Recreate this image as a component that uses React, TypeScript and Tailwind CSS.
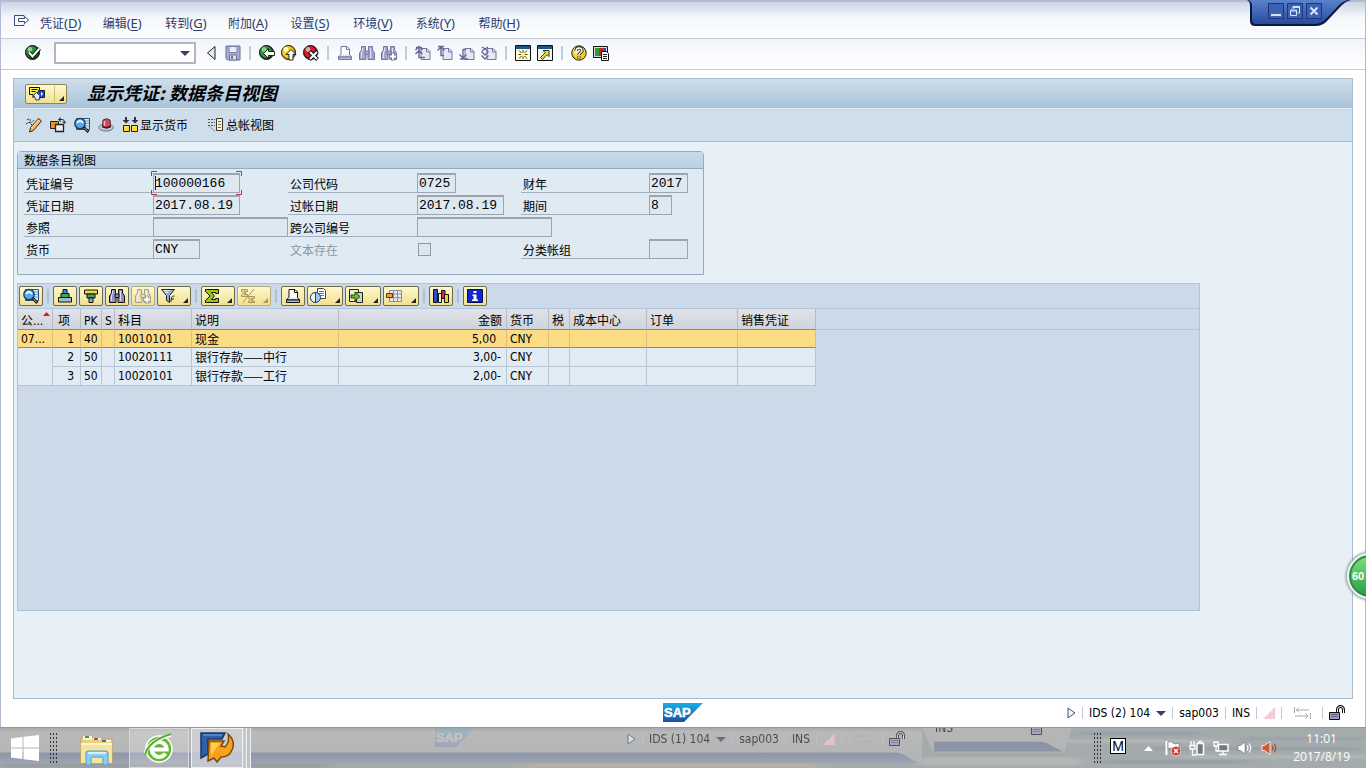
import { Fragment, useState } from 'react';
import type { ReactNode } from 'react';

const uiFont = "font-['DejaVu_Sans_Condensed','DejaVu_Sans','Noto_Sans_CJK_SC',sans-serif]";
const cjkFont = "font-['Noto_Sans_CJK_SC',sans-serif]";
const monoFont = "font-['Liberation_Mono','Noto_Sans_CJK_SC',monospace]";

interface IconProps {
  children: ReactNode;
  size?: string;
}

function Icon({ children, size = 'h-4 w-4' }: IconProps) {
  return (
    <svg viewBox="0 0 16 16" className={`${size} shrink-0`} fill="none" aria-hidden="true">
      {children}
    </svg>
  );
}

function Ball({ light, mid, dark, children }: { light: string; mid: string; dark: string; children: ReactNode }) {
  return (
    <Icon>
      <circle cx="7.5" cy="7.5" r="7" fill={dark} stroke="#111" />
      <circle cx="7" cy="7" r="5.8" fill={mid} />
      <circle cx="5" cy="4.5" r="2.4" fill={light} />
      {children}
    </Icon>
  );
}

const EnterIcon = () => (
  <Ball light="#8fd08f" mid="#2e8b3a" dark="#0c4a1c">
    <path d="M4 7.500l3.500 4L14.500 3.500" stroke="#111" strokeWidth="4" />
    <path d="M4 7.500l3.500 4L14.500 3.500" stroke="#fff" strokeWidth="2" />
  </Ball>
);

const BackIcon = () => (
  <Ball light="#8fd08f" mid="#2e9a3a" dark="#0c4a1c">
    <path d="M4.500 8.500l5-5v3h6v4h-6v3z" fill="#fff" stroke="#111" strokeWidth="0.9" />
  </Ball>
);

const ExitIcon = () => (
  <Ball light="#fffbc0" mid="#f4cf22" dark="#c79a10">
    <path d="M10 4.500l5 5h-3v5.500h-4v-5.500h-3z" fill="#fff" stroke="#111" strokeWidth="0.9" />
  </Ball>
);

const CancelIcon = () => (
  <Ball light="#f2a0a0" mid="#c91f2a" dark="#7d0d14">
    <path d="M6.500 6.500l8 8M14.500 6.500l-8 8" stroke="#111" strokeWidth="4" />
    <path d="M7 7l7 7M14 7l-7 7" stroke="#fff" strokeWidth="2" />
  </Ball>
);

const HelpIcon = () => (
  <Icon>
    <circle cx="8" cy="8" r="7.200" fill="#f0cf20" stroke="#222" />
    <circle cx="6.500" cy="6" r="4" fill="#fbf08a" />
    <path d="M5 6c0-4 6-4 6-.5 0 2.500-3 2-3 4.500M8 11.500v2" stroke="#222" strokeWidth="3.200" />
    <path d="M5 6c0-4 6-4 6-.5 0 2.500-3 2-3 4.500M8 11.700v1.600" stroke="#fff" strokeWidth="1.500" />
  </Icon>
);

const SaveIcon = () => (
  <Icon>
    <path d="M1 1h14v14H2.500L1 13.500z" fill="#a9acd4" stroke="#6d6f9c" />
    <path d="M4 1.500h8v6H4z" fill="#e9ebf7" stroke="#7d80ad" />
    <path d="M4.500 10h7v5h-7z" fill="#dfe1f0" stroke="#6d6f9c" />
    <path d="M6 11h2v3H6z" fill="#6d6f9c" />
  </Icon>
);

function PrintIcon({ muted = false }: { muted?: boolean }) {
  const line = muted ? '#74769f' : '#111';
  return (
    <Icon>
      <path d="M4 1.500h6l2.500 2.500v6.500H4z" fill="#fff" stroke={line} />
      <path d="M9.500 1.500V4.500h3" stroke={line} />
      <path d="M3.500 9.500L1.500 12h13l-2-2.500" fill={muted ? '#e3e5f2' : '#e8ecf2'} stroke={line} />
      <path d="M1.500 12h13v2.500h-13z" fill={muted ? '#b9bbd9' : '#a8bfd6'} stroke={line} />
    </Icon>
  );
}

function FindIcon({ muted = false, more = false, pale = false }: { muted?: boolean; more?: boolean; pale?: boolean }) {
  const line = pale ? '#a5a08c' : muted ? '#7375a5' : '#111';
  const fill = pale ? '#e6e0c0' : muted ? '#a4a6d0' : '#8d90c6';
  return (
    <Icon>
      <path d="M2.500 1.500h4v4l.5 2v7H.5V8l2-3z" fill={fill} stroke={line} />
      <path d="M13.500 1.500h-4v4L9 7.500v7h6.500V8l-2-3z" fill={fill} stroke={line} />
      <path d="M6 6h4v3.500H6z" fill={fill} stroke={line} />
      <path d="M3.500 3v2l-1 3v5M11.500 3v10" stroke="#fff" strokeOpacity="0.7" />
      {more && <path d="M12 7.500v8M8 11.500h8" stroke={line} strokeWidth="4" />}
      {more && <path d="M12 8.500v6M9 11.500h6" stroke="#fff" strokeWidth="2" />}
    </Icon>
  );
}

function PageIcon({ children }: { children: ReactNode }) {
  return (
    <Icon>
      <path d="M6 3.500h6l3 3v8H6z" fill="#e6e8f5" stroke="#74769f" />
      <path d="M11.500 3.500V7H15" stroke="#74769f" />
      <g stroke="#65679a" strokeWidth="1.400">{children}</g>
    </Icon>
  );
}

const FirstPageIcon = () => (
  <PageIcon>
    <path d="M.5 5L4 1.500 7.500 5M.5 9L4 5.500 7.500 9M4 2v10.500h6M1 2.500h6" />
  </PageIcon>
);
const PrevPageIcon = () => (
  <PageIcon>
    <path d="M.5 5.500L4 2l3.500 3.500M4 2.500v8h3M1 1.500h6" />
  </PageIcon>
);
const NextPageIcon = () => (
  <PageIcon>
    <path d="M.5 9.500L4 13l3.500-3.500M4 4v8.500M1 14h8M4 4.500h3" />
  </PageIcon>
);
const LastPageIcon = () => (
  <PageIcon>
    <path d="M.5 6.500L4 10l3.500-3.500M.5 10.500L4 14l3.500-3.500M1 2l6 4M7 2L1 6" />
  </PageIcon>
);

const SessionIcon = () => (
  <Icon>
    <path d="M.5.5h15v15H.5z" fill="#fffde0" stroke="#111" />
    <path d="M1 1h14v3H1z" fill="#1d5487" />
    <path d="M8 5v3M8 11v3M3.500 9.500h3M9.500 9.500h3M4 5.500l2.500 2.500M9.500 11l2.500 2.500M12 5.500L9.500 8M6.500 11L4 13.500" stroke="#4a4400" />
    <circle cx="8" cy="9.500" r="2" fill="#fff27a" />
  </Icon>
);

const ShortcutIcon = () => (
  <Icon>
    <path d="M.5.5h15v15H.5z" fill="#f3f5ef" stroke="#111" />
    <path d="M1 1h14v3H1z" fill="#1d5487" />
    <path d="M6 5.500h6v6l-2-2-4.500 5-2-2L8.500 7.500z" fill="#efe23c" stroke="#222" strokeWidth="0.900" />
  </Icon>
);

const LayoutIcon = () => (
  <Icon>
    <path d="M.5 1.500h14v11H.5z" fill="#d8dce4" stroke="#111" />
    <path d="M2 3h4v8H2z" fill="#2ba02b" />
    <path d="M6 3h4v8H6z" fill="#d32020" />
    <path d="M10 3h3v8h-3z" fill="#3448cc" />
    <path d="M8.500 6.500h5l2 2v7h-7z" fill="#fff" stroke="#111" />
    <path d="M10 9.500h4M10 11.500h4M10 13.500h4" stroke="#222" />
  </Icon>
);

const CommandIcon = () => (
  <svg viewBox="0 0 18 16" className="h-4 w-[18px] shrink-0" fill="none" aria-hidden="true">
    <path d="M1.500 1.500h10v7h-4l-2.500 3v-3H1.500z" fill="#fff04a" stroke="#111" />
    <path d="M3.500 3.500h6M3.500 5.500h4" stroke="#111" />
    <path d="M10.500 4.500h6v7h-4l-1 1.500-3-3z" fill="#244bb8" stroke="#101840" />
    <path d="M5.500 9l3-2.500 3.500 3-1 4.500H8z" fill="#dfe9f7" stroke="#26355f" />
    <path d="M13 6l2 2-2 2z" fill="#fff" />
  </svg>
);

const EditIcon = () => (
  <Icon>
    <path d="M1 3c2-2 4-1 3 1-1 2 2 2 4-1" stroke="#222" strokeDasharray="2 1" />
    <path d="M0 7l3-2 3 3" stroke="#222" strokeDasharray="2 1" />
    <path d="M12.500 1.500l3 2.500-8 9.500-4 1.500 1-4.500z" fill="#f3b45a" stroke="#3a2a12" />
    <path d="M12.500 3L5.500 11" stroke="#ffe8bb" />
  </Icon>
);

const OtherDocIcon = () => (
  <Icon>
    <path d="M.5 4.500h8v7h-8z" fill="#f0921f" stroke="#222" />
    <path d="M5.500 7.500h8v7h-8z" fill="#e9eef5" stroke="#222" strokeWidth="1.300" />
    <path d="M9 2.500h3.500q2 0 2 3" stroke="#222" />
    <path d="M11 .5L8.500 2.500 11 4.500M12.500 4.500l2 2 1.500-2" stroke="#222" />
  </Icon>
);

const DetailIcon = () => (
  <Icon>
    <path d="M2.500 1.500h13v11h-13z" fill="#d8eafa" stroke="#2a4f80" />
    <path d="M3 4h12M3 6.500h12M3 9h12" stroke="#6d9bcc" />
    <circle cx="6" cy="6.500" r="5.200" fill="#57a7e6" stroke="#173864" strokeWidth="1.300" />
    <path d="M3 6q3-4 6 0" stroke="#e6f5ff" strokeWidth="2" />
    <path d="M9.500 10l5 5" stroke="#222" strokeWidth="3" />
    <path d="M10.500 11l3.500 3.500" stroke="#9bb8d8" />
  </Icon>
);

const HeaderHatIcon = () => (
  <Icon>
    <ellipse cx="8" cy="10.500" rx="7.300" ry="3.500" fill="#c2cbdc" stroke="#6a7088" />
    <path d="M4.500 10L5 3q3.500-2.500 7 0l.5 7q-4 2.500-8 0z" fill="#cf4a58" stroke="#5a2732" />
    <path d="M6.500 4v5" stroke="#f5b4ba" strokeWidth="1.500" />
    <path d="M4.500 9.500q4 2 8 0" stroke="#461820" strokeWidth="1.500" />
  </Icon>
);

const CurrencyIcon = () => (
  <svg viewBox="0 0 17 16" className="h-4 w-[17px] shrink-0" fill="none" aria-hidden="true">
    <path d="M4 0v5M13 0v5" stroke="#333" strokeWidth="2" />
    <path d="M.5 3h7L4 6.500zM9.500 3h7L13 6.500z" fill="#333" />
    <path d="M1.500 8.500h6v6h-6zM9.500 8.500h6v6h-6z" fill="#ffd72e" stroke="#222" />
    <path d="M3 10h2M11 10h2" stroke="#fff7c0" />
  </svg>
);

const LedgerIcon = () => (
  <Icon>
    <path d="M0 2.500h7M0 5.500h7M0 8.500h7" stroke="#555" strokeDasharray="2 1" />
    <path d="M1.500 9.500l6 5" stroke="#555" strokeDasharray="1 1" />
    <path d="M8.500 1.500h6v12h-6z" fill="#fff7bd" stroke="#333" />
    <path d="M10 4.500h3M10 7.500h3M10 10.500h3" stroke="#666" />
  </Icon>
);

const SortAscIcon = () => (
  <Icon>
    <path d="M6 1.500h4v4H6z" fill="#3c8bd0" stroke="#111" />
    <path d="M4 5.500h8v4H4z" fill="#43a06a" stroke="#111" />
    <path d="M1.500 9.500h13V14h-13z" fill="#8fc3c9" stroke="#111" />
  </Icon>
);

const SortDescIcon = () => (
  <Icon>
    <path d="M1.500 2h13v4h-13z" fill="#ead83e" stroke="#111" />
    <path d="M4 6h8v4H4z" fill="#43a06a" stroke="#111" />
    <path d="M6 10h4v4.500H6z" fill="#7fb8c4" stroke="#111" />
  </Icon>
);

const FilterIcon = () => (
  <Icon>
    <path d="M1.500 1.500h13l-5 6v7l-3-2v-5z" fill="#8cb4d4" stroke="#222" />
    <path d="M3.500 2.500h6M5 4.500h3" stroke="#e9f5ff" />
    <path d="M11 14c0-5 1-6 3.500-6M11 11h3" stroke="#222" />
  </Icon>
);

const SumIcon = () => (
  <Icon>
    <path d="M1.500 1.500h13v4h-3v-1H7.500l3 3.500-3 3.500h4v-1h3v4h-13v-2L6 8 1.500 3.500z" fill="#9bc21d" stroke="#111" />
  </Icon>
);

const SubtotalIcon = () => (
  <Icon>
    <path d="M1.500 1.500h6v2H4l2 1.500-2 1.500h3.500v2h-6V7l2-2-2-1.500zM8.500 8.500h6v2H11l2 1.300-2 1.400h3.500v1.300h-6V13l2-1.500-2-1.500z" fill="#f0dc7a" stroke="#a89858" />
    <path d="M14 1L3 14.500" stroke="#a89858" />
  </Icon>
);

const ViewsIcon = () => (
  <Icon>
    <path d="M7.500.5h6l2 2v8h-8z" fill="#fff" stroke="#444" />
    <path d="M9 3.500h5M9 5.500h5M9 7.500h5" stroke="#777" />
    <circle cx="5.500" cy="9.500" r="5" fill="#9cc8ee" stroke="#1f3f73" />
    <path d="M5.500 4.500v10a5 5 0 0 1 0-10z" fill="#f4faff" stroke="#1f3f73" />
  </Icon>
);

const ExportIcon = () => (
  <Icon>
    <path d="M1.500 1.500h9v12h-9z" fill="#e7efd0" stroke="#222" />
    <path d="M8.500 4.500h6v10h-6z" fill="#c8d6d0" stroke="#222" />
    <path d="M3 7h4V4l5 4.500L7 13v-3H3z" fill="#7bb51f" stroke="#234a0c" />
  </Icon>
);

const VariantIcon = () => (
  <Icon>
    <path d="M3.500 2.500h12v11h-12zM3.500 6h12M3.500 9.700h12M7.500 2.500v11M11.500 2.500v11" fill="#e9ecef" stroke="#8a8d94" />
    <path d="M.5 5.500h6v4h-6z" fill="#ee9a37" stroke="#5e3a12" />
  </Icon>
);

const ChartIcon = () => (
  <Icon>
    <path d="M.5 1.500h4v13h-4z" fill="#2d4cc0" stroke="#111" />
    <path d="M5.500 5.500h3v9h-3z" fill="#e9edf2" stroke="#111" />
    <path d="M8.500 2.500h3.500v8H8.500z" fill="#d52f2f" stroke="#111" />
    <path d="M11.500 6.500h4v8h-4z" fill="#f3cb30" stroke="#111" />
  </Icon>
);

const InfoIcon = () => (
  <Icon>
    <path d="M.5 1.500h15v13H.5z" fill="#1428c8" stroke="#000a60" />
    <path d="M6.500 3h3v2h-3zM5.500 6.500h4v5h1.500V13h-6v-1.500h1.500V8H5.500z" fill="#fff" />
  </Icon>
);

const Corner = ({ off = false }: { off?: boolean }) => (
  <svg viewBox="0 0 5 5" className="mb-0.5 h-[5px] w-[5px] shrink-0 self-end" aria-hidden="true">
    <path d="M5 0v5H0z" fill={off ? '#a89858' : '#222'} />
  </svg>
);

const LockIcon = () => (
  <svg viewBox="0 0 16 16" className="h-4 w-4 shrink-0" fill="none" aria-hidden="true">
    <path d="M8.500 8V4.500a3 3 0 0 1 6 0V8" stroke="#111" strokeWidth="3" />
    <path d="M8.500 8V4.500a3 3 0 0 1 6 0V8" stroke="#fff" />
    <path d="M.5 7.500h10v7H.5z" fill="#9c9ec4" stroke="#111" />
    <path d="M2 9.500h7M2 11.500h7" stroke="#60628c" />
  </svg>
);

function SapLogo() {
  return (
    <svg viewBox="0 0 40 20" className="h-5 w-10 shrink-0" aria-label="SAP">
      <defs>
        <linearGradient id="sapBlue" x1="0" y1="0" x2="0" y2="1">
          <stop offset="0" stopColor="#16b0ea" />
          <stop offset="1" stopColor="#1b4fa3" />
        </linearGradient>
      </defs>
      <path d="M0 0h40L21 19H0z" fill="url(#sapBlue)" />
      <text x="1" y="14" fontSize="13" fontWeight="bold" fill="#fff" stroke="#fff" strokeWidth="0.500" fontFamily="Liberation Sans, sans-serif">
        SAP
      </text>
    </svg>
  );
}

const menus = [
  ['凭证', 'D'],
  ['编辑', 'E'],
  ['转到', 'G'],
  ['附加', 'A'],
  ['设置', 'S'],
  ['环境', 'V'],
  ['系统', 'Y'],
  ['帮助', 'H'],
];

function MenuBar() {
  return (
    <nav className="flex h-[37px] items-center border-b border-[#c5cbda] bg-linear-to-b from-[#cbd3e3] via-[#f3f6fb] via-40% to-white pt-2 pl-3">
      <button className="mr-2.5 mb-1.5" aria-label="菜单">
        <svg viewBox="0 0 17 14" className="h-3.5 w-[17px]" fill="none" aria-hidden="true">
          <path d="M11 2.500V1.500H1.500v10H11v-1M5.500 4.500h6V2.500l4 3.500-4 3.500V7.500h-6z" stroke="#3d4a78" />
        </svg>
      </button>
      <div className="flex w-[501px]">
        {menus.map(([label, key]) => (
          <button key={key} className="flex-1 text-left text-xs whitespace-nowrap text-[#2b3c6b]">
            {label}
            <span className="font-['Noto_Sans',sans-serif] text-[13px]">
              (<u className="underline-offset-2">{key}</u>)
            </span>
          </button>
        ))}
      </div>
    </nav>
  );
}

const Divider = () => <span className="mx-0.5 h-3.5 w-0.5 shrink-0 bg-[#c3cbd9]" />;

const systemTools: (null | { name: string; icon: ReactNode })[] = [
  {
    name: '隐藏命令字段',
    icon: (
      <Icon>
        <path d="M12 1.500v13L4.500 8z" fill="#e7eaf0" stroke="#222" />
      </Icon>
    ),
  },
  { name: '保存', icon: <SaveIcon /> },
  null,
  { name: '返回', icon: <BackIcon /> },
  { name: '退出', icon: <ExitIcon /> },
  { name: '取消', icon: <CancelIcon /> },
  null,
  { name: '打印', icon: <PrintIcon muted /> },
  { name: '查找', icon: <FindIcon muted /> },
  { name: '查找下一个', icon: <FindIcon muted more /> },
  null,
  { name: '第一页', icon: <FirstPageIcon /> },
  { name: '上一页', icon: <PrevPageIcon /> },
  { name: '下一页', icon: <NextPageIcon /> },
  { name: '最后一页', icon: <LastPageIcon /> },
  null,
  { name: '新建会话', icon: <SessionIcon /> },
  { name: '快捷方式', icon: <ShortcutIcon /> },
  null,
  { name: '帮助', icon: <HelpIcon /> },
  { name: '本地格式', icon: <LayoutIcon /> },
];

function SystemToolbar() {
  const [command, setCommand] = useState('');
  return (
    <div className="flex h-[31px] items-center border-b border-[#c5cbda] bg-linear-to-b from-[#f1f5fa] to-white pb-0.5 pl-6">
      <button aria-label="回车">
        <EnterIcon />
      </button>
      <div className="mr-[7px] ml-[13px] flex h-[22px] w-[142px] items-center border-2 border-[#b3b6bd] bg-white">
        <input
          aria-label="命令"
          value={command}
          onChange={(e) => setCommand(e.target.value)}
          className="min-w-0 flex-1 px-1 text-xs outline-none"
        />
        <button aria-label="历史" className="px-1">
          <svg viewBox="0 0 10 5" className="h-[5px] w-2.5" aria-hidden="true">
            <path d="M0 0h10L5 5z" fill="#35406b" />
          </svg>
        </button>
      </div>
      <div className="flex items-center gap-1.5">
        {systemTools.map((tool, i) =>
          tool ? (
            <button key={i} aria-label={tool.name}>
              {tool.icon}
            </button>
          ) : (
            <Divider key={i} />
          ),
        )}
      </div>
    </div>
  );
}

function WindowControls() {
  const button = 'flex h-4 w-4 items-center justify-center border border-[#1c3678] bg-[#3a62b4]';
  return (
    <div className="absolute -top-0.5 right-3.5 h-7 w-[104px]">
      <svg viewBox="0 0 104 28" className="absolute inset-0 h-7 w-[104px]" aria-hidden="true">
        <defs>
          <linearGradient id="tabBlue" x1="0" y1="0" x2="0" y2="1">
            <stop offset="0" stopColor="#5b82cc" />
            <stop offset="1" stopColor="#274b9c" />
          </linearGradient>
        </defs>
        <path d="M0 0q3 1 3 6v15q0 5 5 5h60q8 0 13-6l13-14q5-5 10-6z" fill="#0c1a40" />
        <path d="M1 0q4 1 4 6v13q0 5 4 5h58q7 0 12-5l13-14q4-4 9-5z" fill="url(#tabBlue)" />
      </svg>
      <div className="relative flex gap-[3px] pt-[3px] pl-[21px]">
        <button className={button} aria-label="最小化">
          <span className="mt-2 h-0.5 w-2.5 bg-[#d6e2f8]" />
        </button>
        <button className={button} aria-label="还原">
          <svg viewBox="0 0 12 12" className="h-3 w-3" fill="none" stroke="#d6e2f8" aria-hidden="true">
            <path d="M4 4V1.500h6.500V8H8.500M4 2.500h6M1.500 5h6v5.500h-6zM1.500 6h6" />
          </svg>
        </button>
        <button className={button} aria-label="关闭">
          <svg viewBox="0 0 10 10" className="h-2.5 w-2.5" fill="none" stroke="#d6e2f8" strokeWidth="2" aria-hidden="true">
            <path d="M1.500 1.500l7 7M8.500 1.500l-7 7" />
          </svg>
        </button>
      </div>
    </div>
  );
}

function Toolbar() {
  return (
    <div className="flex h-[33px] shrink-0 items-center gap-2 border-b border-[#a4b9cc] bg-[#cfdeeb] pl-3 text-xs text-black">
      <button aria-label="更改"><EditIcon /></button>
      <button aria-label="其他凭证"><OtherDocIcon /></button>
      <button aria-label="明细"><DetailIcon /></button>
      <button aria-label="凭证抬头"><HeaderHatIcon /></button>
      <button className="flex items-center gap-px">
        <CurrencyIcon />
        显示货币
      </button>
      <button className="ml-3 flex items-center gap-0.5">
        <LedgerIcon />
        总帐视图
      </button>
    </div>
  );
}

const labelLine = 'flex h-5 items-center border-b border-[#a3b1bf] pt-0.5 pl-0.5';
const fieldBox =
  'h-5 border border-t-2 border-[#9aa5b0] bg-[#dde8f0] pl-px text-[13px] text-black outline-none';

interface FieldProps {
  id: string;
  label: string;
  value: string;
  width: string;
  focused?: boolean;
  span?: string;
}

function Field({ id, label, value, width, focused = false, span = '' }: FieldProps) {
  return (
    <>
      <label htmlFor={id} className={labelLine}>
        {label}
      </label>
      <div className={`relative flex ${span}`}>
        <input id={id} readOnly value={value} className={`${fieldBox} ${monoFont} ${width}`} />
        {focused && (
          <svg viewBox="0 0 91 24" className="pointer-events-none absolute -top-0.5 -left-0.5 h-6 w-[91px]" fill="none" aria-hidden="true">
            <path d="M.5 5V.5H6M85 .5h5.500V5M.5 19v4.500H6M85 23.500h5.500V19" stroke="#c62a3c" />
            <path d="M4.500 5v14" stroke="#111" />
          </svg>
        )}
      </div>
    </>
  );
}

function DocumentHeader() {
  return (
    <section className="w-[687px] max-w-full rounded-t-sm border border-[#93aabf] bg-[#dfeaf3] text-xs">
      <h2 className="flex h-[17px] items-center border-b border-[#93aabf] bg-linear-to-b from-[#c9dbea] to-[#b9d0e4] pl-1.5 text-black">
        数据条目视图
      </h2>
      <div className="grid grid-cols-[129px_135px_129px_104px_128px_auto] gap-y-0.5 pt-1 pr-3.5 pb-[15px] pl-1.5">
        <Field id="docNo" label="凭证编号" value="100000166" width="w-[87px]" focused />
        <Field id="company" label="公司代码" value="0725" width="w-[39px]" />
        <Field id="year" label="财年" value="2017" width="w-[39px]" />

        <Field id="docDate" label="凭证日期" value="2017.08.19" width="w-[87px]" />
        <Field id="postDate" label="过帐日期" value="2017.08.19" width="w-[87px]" />
        <Field id="period" label="期间" value="8" width="w-[23px]" />

        <Field id="reference" label="参照" value="" width="w-[135px]" />
        <Field id="crossNo" label="跨公司编号" value="" width="w-[135px]" span="col-span-3" />

        <Field id="currency" label="货币" value="CNY" width="w-[47px]" />
        <label htmlFor="texts" className="flex h-5 items-center pt-0.5 pl-0.5 text-[#8d979f]">
          文本存在
        </label>
        <div className="flex items-center">
          <input
            id="texts"
            type="checkbox"
            disabled
            className="ml-px h-[13px] w-[13px] appearance-none border border-[#8f9aa5] bg-[#dbe6ee]"
          />
        </div>
        <Field id="ledgerGroup" label="分类帐组" value="" width="w-[39px]" />
      </div>
    </section>
  );
}

const gridTools: (null | { name: string; icon: ReactNode; wide?: string; off?: boolean })[] = [
  { name: '明细', icon: <DetailIcon /> },
  null,
  { name: '升序排序', icon: <SortAscIcon /> },
  { name: '降序排序', icon: <SortDescIcon /> },
  { name: '查找', icon: <FindIcon /> },
  { name: '查找下一个', icon: <FindIcon more pale />, off: true },
  { name: '过滤', icon: <FilterIcon />, wide: 'w-[34px]' },
  null,
  { name: '总计', icon: <SumIcon />, wide: 'w-[34px]' },
  { name: '小计', icon: <SubtotalIcon />, wide: 'w-[34px]', off: true },
  null,
  { name: '打印', icon: <PrintIcon /> },
  { name: '视图', icon: <ViewsIcon />, wide: 'w-9' },
  { name: '输出', icon: <ExportIcon />, wide: 'w-9' },
  { name: '格式', icon: <VariantIcon />, wide: 'w-9' },
  null,
  { name: '图形', icon: <ChartIcon /> },
  null,
  { name: '信息', icon: <InfoIcon /> },
];

const yellowButton = 'flex h-5 items-center rounded-xs border bg-linear-to-b from-[#fdf8cf] to-[#f3e08c]';

function GridToolbar() {
  return (
    <div className="flex h-[25px] items-center gap-0.5 border-b border-[#b4c5d8] pl-px">
      {gridTools.map((tool, i) =>
        tool ? (
          <button
            key={i}
            aria-label={tool.name}
            className={`${yellowButton} ${tool.off ? 'border-[#b5ad80]' : 'border-[#6f6a4a]'} ${
              tool.wide ? `${tool.wide} justify-between px-0.5` : 'w-6 justify-center'
            }`}
          >
            {tool.icon}
            {tool.wide && <Corner off={tool.off} />}
          </button>
        ) : (
          <span key={i} className="mx-0.5 h-3.5 w-0.5 bg-[#b0bfd2]" />
        ),
      )}
    </div>
  );
}

interface Item {
  no: number;
  key: string;
  account: string;
  text: string;
  amount: string;
  currency: string;
}

const items: Item[] = [
  { no: 1, key: '40', account: '10010101', text: '现金', amount: '5,00', currency: 'CNY' },
  { no: 2, key: '50', account: '10020111', text: '银行存款——中行', amount: '3,00-', currency: 'CNY' },
  { no: 3, key: '50', account: '10020101', text: '银行存款——工行', amount: '2,00-', currency: 'CNY' },
];

const columns = [
  { title: '公...', width: 35 },
  { title: '项', width: 28 },
  { title: 'PK', width: 21 },
  { title: 'S', width: 13 },
  { title: '科目', width: 77 },
  { title: '说明', width: 147 },
  { title: '金额', width: 168 },
  { title: '货币', width: 42 },
  { title: '税', width: 21 },
  { title: '成本中心', width: 77 },
  { title: '订单', width: 91 },
  { title: '销售凭证', width: 78 },
];

function ItemTable() {
  return (
    <table className={`table-fixed border-separate border-spacing-0 text-xs whitespace-nowrap text-black ${uiFont}`}>
      <colgroup>
        {columns.map((c) => (
          <col key={c.title} style={{ width: c.width }} />
        ))}
      </colgroup>
      <thead>
        <tr className="h-5 bg-linear-to-b from-[#e0e3e9] to-[#cfd3da]">
          {columns.map((c, i) => (
            <th
              key={c.title}
              className={`relative border-r border-[#b3bcc8] pt-1 pb-0 leading-4 font-normal ${
                c.title === '金额' ? 'pr-1 text-right' : 'pl-[3px] text-left'
              } ${c.title === '项' ? 'pl-[5px]' : ''} ${i === 0 ? 'pl-1' : ''}`}
            >
              {c.title}
              {i === 0 && (
                <svg viewBox="0 0 7 4" className="absolute top-[3px] right-0.5 h-1 w-[7px]" aria-hidden="true">
                  <path d="M3.500 0L7 4H0z" fill="#c81e32" />
                </svg>
              )}
            </th>
          ))}
        </tr>
      </thead>
      <tbody>
        {items.map((item, i) => {
          const selected = i === 0;
          const cell = `border-r py-0 pl-[3px] ${
            selected ? 'border-y border-r-[#d9c07c] border-y-[#b9803c] bg-[#fbdb84]' : 'border-b border-[#b7c6d4] bg-[#e1ebf4]'
          }`;
          return (
            <tr key={item.no} className="h-[19px]">
              {selected && <td className={`${cell} pl-1`}>07...</td>}
              {i === 1 && <td rowSpan={2} className={cell} />}
              <td className={`${cell} pr-1.5 text-right`}>{item.no}</td>
              <td className={cell}>{item.key}</td>
              <td className={cell} />
              <td className={`${cell} pl-1`}>{item.account}</td>
              <td className={`${cell} ${cjkFont} leading-4`}>{item.text}</td>
              <td className={`${cell} text-right ${item.amount.endsWith('-') ? 'pr-[5px]' : 'pr-2.5'}`}>{item.amount}</td>
              <td className={`${cell} pl-1`}>{item.currency}</td>
              <td className={cell} />
              <td className={cell} />
              <td className={cell} />
              <td className={cell} />
            </tr>
          );
        })}
      </tbody>
    </table>
  );
}

function StatusFields({ session }: { session: number }) {
  const fields: ReactNode[] = [
    <span key="ids" className="flex items-center gap-1.5">
      IDS ({session}) 104
      <svg viewBox="0 0 10 5" className="h-[5px] w-2.5" aria-hidden="true">
        <path d="M0 0h10L5 5z" fill="#35406b" />
      </svg>
    </span>,
    <span key="host">sap003</span>,
    <span key="mode">INS</span>,
    <svg key="signal" viewBox="0 0 12 12" className="h-3 w-3" aria-hidden="true">
      <path d="M0 12L12 0v12z" fill="#f6d3da" />
      <path d="M3 9v3M7 5v7M11 1v11" stroke="#efbcc6" />
    </svg>,
    <svg key="arrows" viewBox="0 0 28 14" className="h-3.5 w-7" fill="none" stroke="#a5a9b2" aria-hidden="true">
      <path d="M6.500 1v6M8 4h13M11 1.500L8.500 4l2.500 2.500M7 10h13M17.500 7.500L20 10l-2.500 2.500M22.500 7v6" />
    </svg>,
    <LockIcon key="lock" />,
  ];
  return (
    <div className={`flex items-center gap-1.5 text-xs whitespace-nowrap text-black ${uiFont}`}>
      <svg viewBox="0 0 9 12" className="h-3 w-[9px]" fill="#f3f6fa" stroke="#3d5178" aria-hidden="true">
        <path d="M1 1v10l7-5z" />
      </svg>
      {fields.map((field, i) => (
        <Fragment key={i}>
          <span className="h-3 w-px bg-[#c3c9d4]" />
          {field}
        </Fragment>
      ))}
    </div>
  );
}

function StatusBar() {
  return (
    <footer className="grid h-7 shrink-0 grid-cols-[1fr_auto_1fr] items-center bg-white">
      <div className="col-start-2">
        <SapLogo />
      </div>
      <div className="flex justify-end pr-5">
        <StatusFields session={2} />
      </div>
    </footer>
  );
}

const Grip = ({ rows }: { rows: string }) => (
  <span className={`w-[9px] bg-[radial-gradient(#333_1px,transparent_1px)] bg-[size:3px_4px] ${rows}`} />
);

function Wallpaper() {
  return (
    <svg viewBox="0 0 1366 41" preserveAspectRatio="none" className="absolute inset-0 h-full w-full" aria-hidden="true">
      <defs>
        <linearGradient id="glass" x1="0" y1="0" x2="0" y2="1">
          <stop offset="0" stopColor="#a9a9a9" />
          <stop offset="0.120" stopColor="#b9b9b9" />
          <stop offset="1" stopColor="#b3b4b5" />
        </linearGradient>
        <linearGradient id="band" x1="0" y1="0" x2="0" y2="1">
          <stop offset="0" stopColor="#8d94a8" />
          <stop offset="1" stopColor="#9ea4b2" />
        </linearGradient>
        <filter id="soft">
          <feGaussianBlur stdDeviation="8 1" />
        </filter>
      </defs>
      <path d="M0 0h1366v41H0z" fill="#a5abad" />
      <g filter="url(#soft)">
        <path d="M1080 4h120v3h-120zM1150 20h210v3h-210zM1100 33h150v3h-150zM1240 10h126v2h-126z" fill="#939fa3" />
        <path d="M1060 12h160v3h-160zM1180 28h186v3h-186zM920 30h160v8H920z" fill="#b5b9b6" />
        <path d="M0 36h330v5H0z" fill="#999ea3" />
        <path d="M520 36h300v5H520z" fill="#b5b1a2" />
      </g>
      <path d="M0 0h922v34H0z" fill="url(#glass)" />
      <path d="M0 25h893q10 0 15 5l10 6H0z" fill="url(#band)" />
      <path d="M922 0h150l-8 25H934z" fill="#b4b5b5" />
      <path d="M934 14h105q8 0 14 5l10 5H934z" fill="#8d94a8" />
    </svg>
  );
}

function Taskbar() {
  return (
    <div className="relative flex h-[41px] shrink-0 items-center overflow-hidden border-t border-[#999]">
      <Wallpaper />
      <div className="pointer-events-none absolute top-0 left-0 flex h-[22px] w-[905px] items-center justify-end opacity-60">
        <StatusFields session={1} />
      </div>
      <div className="pointer-events-none absolute top-0 left-[435px] opacity-15">
        <SapLogo />
      </div>
      <div className={`pointer-events-none absolute -top-2 left-[935px] flex items-center gap-[78px] text-xs opacity-60 ${uiFont}`}>
        INS
        <LockIcon />
      </div>

      <button className="relative ml-[11px]" aria-label="开始">
        <svg viewBox="0 0 28 26" className="h-[26px] w-7" fill="#fff" aria-hidden="true">
          <path d="M0 3.500l11.500-1.500v10.500H0zM12.500 1.800L28 0v12.500H12.500zM0 13.500h11.500V24L0 22.500zM12.500 13.500H28V26l-15.500-1.800z" />
        </svg>
      </button>
      <span className="relative ml-[10px] flex">
        <Grip rows="h-8" />
      </span>
      <button className="relative ml-[22px] pt-1" aria-label="文件资源管理器">
        <svg viewBox="0 0 34 30" className="h-[30px] w-[34px]" aria-hidden="true">
          <path d="M1 2h11l2 2h18v24H1z" fill="#e9cf7c" stroke="#c9a94f" />
          <path d="M3 1h9v4H3z" fill="#f7f3d8" />
          <path d="M5 1h4v2H5z" fill="#3f9a44" />
          <path d="M13 3h8v2h-8z" fill="#f7f3d8" />
          <path d="M14 3h4v2h-4z" fill="#c8473a" />
          <path d="M22 5h9v2h-9z" fill="#f7f3d8" />
          <path d="M22 5h4v2h-4z" fill="#3a6fc0" />
          <path d="M1 8h31v20H1z" fill="#f6e39c" />
          <path d="M1 9h31" stroke="#fdf6cf" strokeWidth="2" />
          <path d="M6 30V18q0-2 2-2h18q2 0 2 2v12h-5v-7q0-1-1-1H12q-1 0-1 1v7z" fill="#8fcdef" stroke="#4c9fce" />
          <path d="M8 18h18" stroke="#d6effb" strokeWidth="2" />
        </svg>
      </button>
      <button className="relative ml-[15px] flex h-10 w-[60px] items-center justify-center border border-[#d6d8da] bg-white/20" aria-label="浏览器">
        <svg viewBox="0 0 30 30" className="h-[30px] w-[30px]" fill="none" aria-hidden="true">
          <circle cx="15" cy="16" r="13" fill="#5fbb2d" stroke="#fff" strokeWidth="1.500" />
          <path d="M21.500 20.500a7.500 7.500 0 1 1 1.200-4H9" stroke="#fff" strokeWidth="4" />
          <path d="M1 22Q3 8 27 2" stroke="#fff" strokeWidth="3.500" />
          <path d="M1 22Q4 8 27 1" stroke="#55ad28" strokeWidth="2" />
        </svg>
      </button>
      <button className="relative ml-0.5 flex h-10 w-[52px] items-center justify-center border border-[#eef0f2] bg-[#d4d7dd]/70" aria-label="SAP Logon">
        <svg viewBox="0 0 34 32" className="h-8 w-[34px]" aria-hidden="true">
          <path d="M1 1h24l-3 6H8v15l-7 4z" fill="#2e5fa8" stroke="#183663" strokeWidth="1.500" />
          <path d="M3 3h19" stroke="#78a5dc" />
          <path d="M9 9h15l-3 5 4 1q5-5 3-13 8 7 4 16-3 7-11 7l-4 5-3-4-6 3z" fill="#f7a21b" stroke="#7a4a0c" strokeWidth="1.500" />
          <path d="M11 11h9l-9 12z" fill="#fccf5c" />
        </svg>
      </button>
      <span className="relative h-10 w-1 border-r border-[#eef0f2] bg-[#c6c9ce]" />
      <span className="relative h-10 w-1 border-r border-[#eef0f2] bg-[#bfc2c7]" />

      <div className="relative ml-auto flex items-center pr-4">
        <Grip rows="h-8" />
        <button className="mb-1 ml-2 flex h-4 w-4 items-center justify-center border border-black bg-white font-['Liberation_Sans',sans-serif] text-sm leading-none text-black" aria-label="输入法 M">
          M
        </button>
        <button className="ml-[18px]" aria-label="显示隐藏的图标">
          <svg viewBox="0 0 9 5" className="h-[5px] w-[9px]" aria-hidden="true">
            <path d="M4.500 0L9 5H0z" fill="#fff" />
          </svg>
        </button>
        <div className="ml-3 flex items-center gap-2">
          <button aria-label="操作中心">
            <Icon>
              <path d="M1.500 1v14" stroke="#fff" strokeWidth="2" />
              <path d="M3 2q3-1 5 1t6 0v6q-4 2-6 0t-5 0z" fill="#fff" stroke="#555" strokeWidth="0.500" />
              <circle cx="11" cy="11" r="4.800" fill="#d8392b" stroke="#fff" strokeWidth="0.600" />
              <path d="M9 9l4 4M13 9l-4 4" stroke="#fff" strokeWidth="1.500" />
            </Icon>
          </button>
          <button aria-label="电源">
            <Icon>
              <path d="M8 3.500h6.500v11H8zM10 1.500h2.500v2H10z" stroke="#fff" strokeWidth="1.500" fill="#777" />
              <path d="M2 1v4M5 1v4M1 5.500h5V9H1zM3.500 9v6H7" stroke="#fff" strokeWidth="1.300" />
            </Icon>
          </button>
          <button aria-label="网络">
            <Icon>
              <path d="M5.500 4.500h9.500v6.500H5.500z" stroke="#fff" strokeWidth="1.500" fill="#777" />
              <path d="M10 11v3M6 14.500h8M1 2h4v4H1zM3 6v5h3" stroke="#fff" strokeWidth="1.300" />
            </Icon>
          </button>
          <button aria-label="音量">
            <Icon>
              <path d="M1 5.500h2.500L8 2v12L3.500 10.500H1z" fill="#fff" stroke="#555" strokeWidth="0.500" />
              <path d="M10 5.500q2 2.500 0 5M12 3.500q3.500 4.500 0 9" stroke="#fff" strokeWidth="1.200" />
            </Icon>
          </button>
          <button aria-label="声音管理器">
            <Icon>
              <path d="M1 5.500h2.500L9 1.500v13L3.500 10.500H1z" fill="#d8552d" stroke="#fff" strokeWidth="0.800" />
              <path d="M11 5.500q2 2.500 0 5M13 3.500q3.500 4.500 0 9" stroke="#b9452a" strokeWidth="1.200" />
            </Icon>
          </button>
        </div>
        <div className="ml-4 text-center font-['Open_Sans','Noto_Sans',sans-serif] text-xs leading-[18px] text-white">
          <div>11:01</div>
          <div>2017/8/19</div>
        </div>
      </div>
    </div>
  );
}

export default function App() {
  return (
    <div className={`relative flex h-screen flex-col overflow-hidden bg-white ${cjkFont}`}>
      <div className="relative flex min-h-0 flex-1 flex-col border-x border-t-2 border-[#b3b9d6]">
        <MenuBar />
        <SystemToolbar />
        <WindowControls />

        <main className="mx-3 mt-2 flex min-h-0 flex-1 flex-col border border-[#a9bac9] bg-[#e8f0f7]">
          <header className="flex h-[30px] shrink-0 items-center border-b border-[#dfe9f2] bg-linear-to-b from-[#cfdfeb] to-[#a9c3d9] pl-[11px]">
            <button className={`${yellowButton} w-[42px] justify-between border-[#8c8454] px-0.5`} aria-label="对象服务">
              <CommandIcon />
              <span className="mr-1 ml-auto h-4 w-px bg-[#cbbd7a]" />
              <Corner />
            </button>
            <h1 className="ml-5 pb-1 text-lg leading-none font-bold text-black italic">显示凭证: 数据条目视图</h1>
          </header>
          <Toolbar />
          <div className="flex min-h-0 flex-1 flex-col px-[3px] pt-[9px]">
            <DocumentHeader />
            <section className="mt-2 mr-[149px] mb-[87px] flex-1 border border-[#b1c3d6] bg-[#cbd9e9]">
              <GridToolbar />
              <div className="bg-[linear-gradient(#b4c5d8,#b4c5d8)] bg-[length:100%_1px] bg-[position:0_20px] bg-no-repeat">
                <ItemTable />
              </div>
            </section>
          </div>
        </main>

        <StatusBar />
      </div>
      <Taskbar />

      <button className="absolute top-[553px] -right-[27px] flex h-[46px] w-[46px] items-center rounded-full border-2 border-[#e9f5ea] bg-linear-to-b from-[#7fe07c] to-[#1f9c45] pl-[3px] font-['Liberation_Sans',sans-serif] text-[11px] font-bold text-white shadow-[0_0_3px_1px_#7a8a80] ring-2 ring-[#2c8a4a] ring-inset">
        60
      </button>
    </div>
  );
}
